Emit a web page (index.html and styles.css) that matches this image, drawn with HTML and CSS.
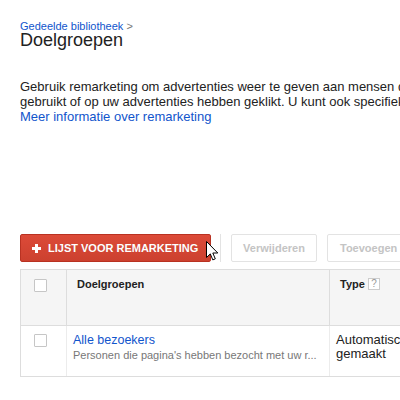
FILE: index.html
```html
<!DOCTYPE html>
<html lang="nl">
<head>
<meta charset="utf-8">
<title>Doelgroepen</title>
<link rel="stylesheet" href="styles.css">
</head>
<body>
<div class="page">
  <div class="crumb"><a class="link" href="#">Gedeelde bibliotheek</a> <span class="sep-gt">&gt;</span></div>
  <h1 class="title">Doelgroepen</h1>
  <p class="intro">Gebruik remarketing om advertenties weer te geven aan mensen die uw website hebben bezocht of uw mobiele app hebben<br>gebruikt of op uw advertenties hebben geklikt. U kunt ook specifieke lijsten maken op basis van uw eigen gegevens.<br><a class="link" href="#">Meer informatie over remarketing</a></p>

  <div class="toolbar">
    <button class="btn-red" type="button">
      <svg class="plus" width="9" height="9" viewBox="0 0 9 9"><rect x="3" y="0" width="3" height="9" fill="#fff"/><rect x="0" y="3" width="9" height="3" fill="#fff"/></svg>
      <span>LIJST VOOR REMARKETING</span>
    </button>
    <span class="divider"></span>
    <button class="btn-off btn-del" type="button">Verwijderen</button>
    <button class="btn-off" type="button">Toevoegen aan lijst</button>
    <svg class="cursor" width="13" height="21" viewBox="0 0 13 21"><path d="M0.5 0.5 L0.5 16.5 L4.3 12.9 L6.8 18.9 L9.3 17.8 L6.8 12 L11.8 12 Z" fill="#fff" stroke="#000" stroke-width="1" stroke-linejoin="miter"/></svg>
  </div>

  <div class="grid">
    <div class="cell hd c1"><span class="check"></span></div>
    <div class="cell hd c2">Doelgroepen</div>
    <div class="cell hd c3">Type <span class="help">?</span></div>

    <div class="cell bd c1"><span class="check"></span></div>
    <div class="cell bd c2">
      <a class="link name" href="#">Alle bezoekers</a>
      <div class="desc">Personen die pagina's hebben bezocht met uw r...</div>
    </div>
    <div class="cell bd c3 type">Automatisch<br>gemaakt</div>
  </div>
</div>
</body>
</html>
```

FILE: styles.css
```css
html, body {
  margin: 0;
  padding: 0;
  background: #fff;
  overflow: hidden;
}

.page {
  width: 400px;
  height: 400px;
  overflow: hidden;
  padding: 20px 0 0 20px;
  box-sizing: border-box;
  font-family: "Liberation Sans", Arial, sans-serif;
  color: #222;
}

.link {
  color: #15c;
  text-decoration: none;
}

.crumb {
  font-size: 11px;
  line-height: 12px;
  white-space: nowrap;
}

.sep-gt {
  color: #777;
}

.title {
  margin: 0;
  font-size: 18px;
  line-height: 17px;
  font-weight: normal;
  color: #222;
}

.intro {
  margin: 30px 0 0 0;
  font-size: 13px;
  line-height: 15px;
  white-space: nowrap;
}

.toolbar {
  position: relative;
  margin-top: 110px;
  display: flex;
  align-items: center;
  height: 28px;
}

.btn-red {
  flex: none;
  display: flex;
  align-items: center;
  gap: 7px;
  height: 28px;
  width: 191px;
  box-sizing: border-box;
  padding: 0 0 0 11px;
  margin: 0;
  border: 1px solid #b93222;
  border-radius: 2px;
  background: linear-gradient(#dc4a38, #cc412f);
  color: #fff;
  font-family: "Liberation Sans", Arial, sans-serif;
  font-size: 11px;
  font-weight: bold;
  white-space: nowrap;
  text-shadow: 0 0 0.5px rgba(0,0,0,0.2);
}

.plus {
  display: block;
  flex: none;
}

.divider {
  flex: none;
  width: 1px;
  height: 28px;
  background: #e3e3e3;
  margin: 0 10px 0 9px;
}

.btn-off {
  flex: none;
  height: 28px;
  box-sizing: border-box;
  padding: 0 12px;
  margin: 0 10px 0 0;
  border: 1px solid #e3e3e3;
  border-radius: 2px;
  background: #fff;
  color: #c4c4c4;
  font-family: "Liberation Sans", Arial, sans-serif;
  font-size: 11px;
  font-weight: bold;
  white-space: nowrap;
}

.btn-del {
  width: 86px;
  padding: 0;
}

.cursor {
  position: absolute;
  left: 186px;
  top: 7px;
}

.grid {
  margin-top: 7px;
  display: grid;
  grid-template-columns: 45px 263px 160px;
  border-top: 1px solid #ddd;
  border-left: 1px solid #ddd;
  border-bottom: 1px solid #ddd;
  width: max-content;
}

.cell {
  box-sizing: border-box;
}

.hd {
  background: #f5f5f5;
  height: 56px;
  font-size: 11px;
  line-height: 13px;
  font-weight: bold;
  color: #222;
  border-bottom: 1px solid #ddd;
}

.bd {
  height: 50px;
  background: #fff;
}

.c1 {
  padding: 9px 0 0 13px;
}

.hd.c2, .hd.c3 {
  border-left: 1px solid #ddd;
  padding: 8px 0 0 10px;
}

.bd.c1 {
  padding-top: 8px;
}

.bd.c2 {
  border-left: 1px solid #ececec;
  padding: 6px 0 0 6px;
}

.bd.c3 {
  border-left: 1px solid #ececec;
  padding: 7px 0 0 6px;
}

.check {
  display: block;
  width: 13px;
  height: 13px;
  box-sizing: border-box;
  border: 1px solid #c6c6c6;
  border-radius: 1px;
  background: #fff;
}

.help {
  display: inline-block;
  vertical-align: top;
  margin-top: 0;
  margin-left: 0;
  width: 12px;
  height: 12px;
  box-sizing: border-box;
  border: 1px solid #ccc;
  background: #fff;
  color: #999;
  font-size: 10px;
  line-height: 10px;
  font-weight: normal;
  text-align: center;
}

.name {
  display: block;
  font-size: 12.5px;
  line-height: 16px;
  white-space: nowrap;
}

.desc {
  font-size: 11px;
  line-height: 14px;
  color: #777;
  white-space: nowrap;
}

.type {
  font-size: 13px;
  line-height: 14px;
  color: #222;
  white-space: nowrap;
}
```
